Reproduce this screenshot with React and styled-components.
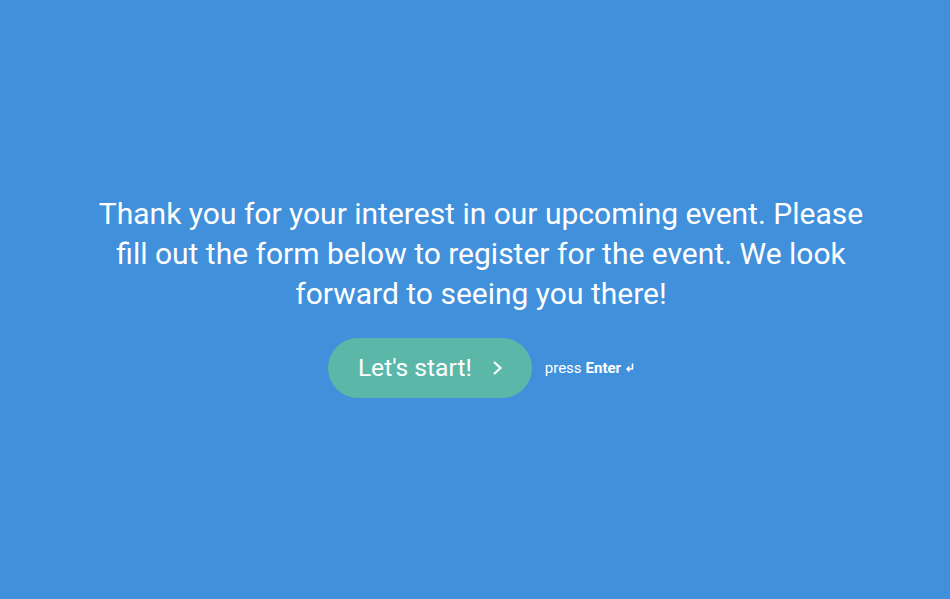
import React from 'react';
import styled, { createGlobalStyle } from 'styled-components';

const GlobalStyle = createGlobalStyle`
  html, body {
    margin: 0;
    padding: 0;
    height: 100%;
  }
  body {
    background-color: #4190dc;
    font-family: Roboto, 'Liberation Sans', sans-serif;
  }
  #root {
    height: 100%;
  }
`;

const Screen = styled.div`
  display: flex;
  align-items: center;
  justify-content: center;
  height: 100vh;
  box-sizing: border-box;
  padding: 0 0 8px 12px;
  background-color: #4190dc;
`;

const Welcome = styled.section`
  display: flex;
  flex-direction: column;
  align-items: center;
  max-width: 780px;
`;

const Message = styled.p`
  margin: 0;
  color: #ffffff;
  font-size: 30px;
  line-height: 40px;
  text-align: center;
`;

const Actions = styled.div`
  display: flex;
  align-items: center;
  gap: 13px;
  margin-top: 24px;
`;

const StartButton = styled.button`
  display: flex;
  align-items: center;
  gap: 18px;
  height: 60px;
  padding: 0 28px 0 30px;
  border: none;
  border-radius: 30px;
  background-color: #5bb8a9;
  color: #ffffff;
  font-family: Roboto, 'Liberation Sans', sans-serif;
  font-size: 24.6px;
  cursor: pointer;
`;

const Hint = styled.span`
  display: flex;
  align-items: center;
  gap: 4px;
  color: #ffffff;
  font-size: 15px;

  b {
    font-weight: 700;
  }
`;

const Chevron = () => (
  <svg width="14" height="16" viewBox="0 0 14 16" fill="none">
    <path d="M4 2l6.5 6-6.5 6" stroke="#fff" strokeWidth="2.2" strokeLinejoin="miter" />
  </svg>
);

const EnterIcon = () => (
  <svg width="9" height="10" viewBox="0 0 9 10" fill="none">
    <path d="M7.5 1v5H2M4 4L2 6l2 2" stroke="#fff" strokeWidth="1.6" strokeLinecap="round" strokeLinejoin="round" />
  </svg>
);

export default function App() {
  return (
    <>
      <GlobalStyle />
      <Screen>
        <Welcome>
          <Message>
            Thank you for your interest in our upcoming event. Please fill out the form below to register for the event. We look forward to seeing you there!
          </Message>
          <Actions>
            <StartButton>
              Let's start!
              <Chevron />
            </StartButton>
            <Hint>
              press <b>Enter</b> <EnterIcon />
            </Hint>
          </Actions>
        </Welcome>
      </Screen>
    </>
  );
}
